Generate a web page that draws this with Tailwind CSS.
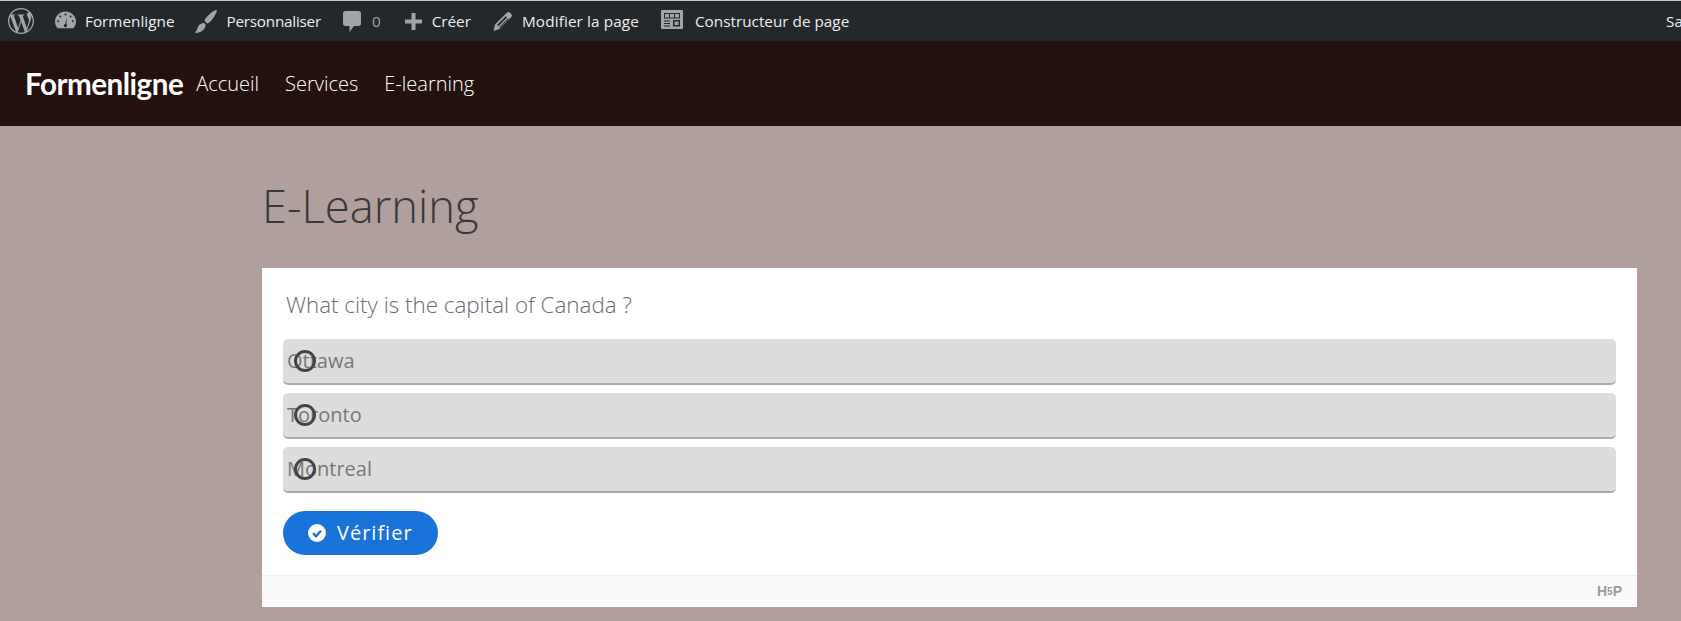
<!DOCTYPE html>
<html lang="fr">
<head>
    <meta charset="UTF-8">
    <meta name="viewport" content="width=device-width, initial-scale=1.0">
    <title>E-Learning - Formenligne</title>
    <script src="https://cdn.jsdelivr.net/npm/@tailwindcss/browser@4"></script>
</head>
<body class="bg-[#b09f9d] font-['Open_Sans',sans-serif] h-[621px] overflow-hidden">
    <!-- admin bar -->
    <div class="h-[41px] bg-[#23282d] border-t border-[#c4c4c4] flex items-center text-[15.3px] text-[#eeeeee] whitespace-nowrap relative overflow-hidden">
        <svg class="ml-[8px] w-[26px] h-[26px] fill-[#a0a5aa]" viewBox="0 0 24 24"><path d="M21.469 6.825c.84 1.537 1.318 3.3 1.318 5.175 0 3.979-2.156 7.456-5.363 9.325l3.295-9.527c.615-1.54.82-2.771.82-3.864 0-.405-.026-.78-.07-1.11m-7.981.105c.647-.03 1.232-.105 1.232-.105.582-.075.514-.93-.067-.899 0 0-1.755.135-2.88.135-1.064 0-2.85-.15-2.85-.15-.585-.03-.661.855-.075.885 0 0 .54.061 1.125.09l1.68 4.605-2.37 7.08L5.354 6.9c.649-.03 1.234-.1 1.234-.1.585-.075.516-.93-.065-.896 0 0-1.746.138-2.874.138-.2 0-.438-.008-.69-.015C4.911 3.15 8.235 1.215 12 1.215c2.809 0 5.365 1.072 7.286 2.833-.046-.003-.091-.009-.141-.009-1.06 0-1.812.923-1.812 1.914 0 .89.513 1.643 1.06 2.531.411.72.89 1.643.89 2.977 0 .915-.354 1.994-.821 3.479l-1.075 3.585-3.9-11.61.001.014zM12 22.784c-1.059 0-2.081-.153-3.048-.437l3.237-9.406 3.315 9.087c.024.053.05.101.078.149-1.12.393-2.325.609-3.582.609M1.211 12c0-1.564.336-3.05.935-4.39L7.29 21.709C3.694 19.96 1.212 16.271 1.211 12M12 0C5.385 0 0 5.385 0 12s5.385 12 12 12 12-5.385 12-12S18.615 0 12 0"/></svg>
        <!-- gauge -->
        <svg class="ml-[21px] w-[21px] h-[18px] -mt-[3px] fill-[#a0a5aa]" viewBox="0 0 22 18"><path fill-rule="evenodd" d="M11 0C5 0 0 4.600 0 10.600c0 2.700 1 5.200 2.700 7h16.600c1.700-1.800 2.700-4.300 2.700-7C22 4.600 17 0 11 0zM11 2.300a1 1 0 1 1 0 2 1 1 0 0 1 0-2zM5.600 4.300a1 1 0 1 1 0 2 1 1 0 0 1 0-2zM16.400 4.300a1 1 0 1 1 0 2 1 1 0 0 1 0-2zM3.400 9.300a1 1 0 1 1 0 2 1 1 0 0 1 0-2zM18.600 9.300a1 1 0 1 1 0 2 1 1 0 0 1 0-2zM12.800 6.500l-.9 6.800c.5.400.8.900.8 1.500a1.700 1.700 0 0 1-3.400 0c0-.8.600-1.500 1.400-1.700z"/></svg>
        <span class="ml-[9px]">Formenligne</span>
        <!-- brush -->
        <svg class="ml-[21px] w-[22px] h-[23px] fill-[#a0a5aa]" viewBox="0 0 22 23"><path d="M21 0c.7 0 1.100.5.9 1.200C20.500 5 17 10.500 13.500 13c-.7.500-1.500.5-2 0l-1.600-1.700c-.5-.5-.4-1.300.1-2C12.500 5.500 17.500 1 21 0zM8 13c1.600-.4 3 1.300 2.500 2.900-.8 3.500-3.800 6.700-10 7-.4 0-.6-.4-.3-.7C2 20.700 2.200 19.200 2.700 17.600 3.400 15.200 5.300 13.600 8 13z"/></svg>
        <span class="ml-[9px] tracking-[-0.25px]">Personnaliser</span>
        <!-- comment -->
        <svg class="ml-[22px] w-[18px] h-[21px] fill-[#a0a5aa]" viewBox="0 0 18 21"><path d="M2.500 0h13C17 0 18 1 18 2.500v10c0 1.500-1 2.500-2.500 2.500H11l-4.500 6v-6h-4C1 15 0 14 0 12.500v-10C0 1 1 0 2.500 0z"/></svg>
        <span class="ml-[11px] text-[#a0a5aa]">0</span>
        <!-- plus -->
        <svg class="ml-[24px] w-[17px] h-[17px] fill-[#a0a5aa]" viewBox="0 0 17 17"><path d="M6.500 0h4v6.500H17v4h-6.500V17h-4v-6.500H0v-4h6.500z"/></svg>
        <span class="ml-[10px]">Créer</span>
        <!-- pencil -->
        <svg class="ml-[22px] w-[19px] h-[19px] fill-[#a0a5aa]" viewBox="0 0 19 19"><path fill-rule="evenodd" d="M14 .6c.8-.8 2-.8 2.800 0l1.600 1.600c.8.800.8 2 0 2.800L6.500 17 .5 19 2 12.500zM12.800 4.300L4 13l1.300 1.300 8.800-8.800zM15 6.500l-8.700 8.700.9.600 8.700-8.700z"/></svg>
        <span class="ml-[10px] tracking-[0.12px]">Modifier la page</span>
        <!-- page builder -->
        <svg class="ml-[22px] w-[22px] h-[19px] -mt-[3px]" viewBox="0 0 22 19"><rect width="22" height="19" rx="1" fill="#a0a5aa"/><rect x="3" y="3" width="16" height="5.500" fill="#23282d"/><rect x="4" y="4" width="4" height="3.500" fill="#a0a5aa"/><rect x="9" y="4" width="4" height="3.500" fill="#a0a5aa"/><rect x="14" y="4" width="4" height="3.500" fill="#a0a5aa"/><rect x="3" y="10.500" width="6" height="1" fill="#23282d"/><rect x="3" y="13" width="6" height="1" fill="#23282d"/><rect x="3" y="15.500" width="6" height="1" fill="#23282d"/><rect x="12" y="10" width="7" height="6.500" fill="#23282d"/><rect x="13.500" y="11.500" width="4" height="3.500" fill="#a0a5aa"/></svg>
        <span class="ml-[12px]">Constructeur de page</span>
        <span class="absolute left-[1666px]">Salut</span>
    </div>

    <!-- site nav -->
    <nav class="h-[85px] bg-[#24100d] flex items-center text-white pl-[25px]">
        <a class="font-['Lato',sans-serif] font-bold text-[29.6px] tracking-[-0.5px] leading-none">Formenligne</a>
        <a class="ml-[13px] font-light text-[20px]">Accueil</a>
        <a class="ml-[26px] font-light text-[20px]">Services</a>
        <a class="ml-[26px] font-light text-[20px]">E-learning</a>
    </nav>

    <main class="pl-[262px] w-[1637px]">
        <h1 class="pt-[50px] h-[142px] font-light text-[45.3px] leading-[60px] text-[#3a3838]">E-Learning</h1>

        <!-- h5p card -->
        <div class="bg-white h-[339px] flex flex-col">
            <div class="flex-1 px-[21px]">
                <p class="pt-[23px] pl-[3px] h-[71px] font-light text-[22.4px] leading-[28px] text-[#6b6b6b]">What city is the capital of Canada ?</p>
                <div class="flex flex-col gap-[8px]">
                    <div class="relative h-[46px] bg-[#dddddd] rounded-[5px] border-b-2 border-[#aaaaaa] flex items-center pl-[4px] text-[20px] text-[#777777]">
                        Ottawa
                        <span class="absolute left-[11px] top-[11px] w-[22px] h-[22px] rounded-full border-[3px] border-[#444444]"></span>
                    </div>
                    <div class="relative h-[46px] bg-[#dddddd] rounded-[5px] border-b-2 border-[#aaaaaa] flex items-center pl-[4px] text-[20px] text-[#777777]">
                        Toronto
                        <span class="absolute left-[11px] top-[11px] w-[22px] h-[22px] rounded-full border-[3px] border-[#444444]"></span>
                    </div>
                    <div class="relative h-[46px] bg-[#dddddd] rounded-[5px] border-b-2 border-[#aaaaaa] flex items-center pl-[4px] text-[20px] text-[#777777]">
                        Montreal
                        <span class="absolute left-[11px] top-[11px] w-[22px] h-[22px] rounded-full border-[3px] border-[#444444]"></span>
                    </div>
                </div>
                <button class="mt-[18px] w-[155px] h-[44px] bg-[#1a73d9] rounded-full text-white font-medium text-[20px] tracking-[1px] flex items-center pl-[25px]">
                    <svg class="w-[18px] h-[18px] mr-[11px]" viewBox="0 0 18 18"><circle cx="9" cy="9" r="9" fill="#ffffff"/><path d="M5 9.200l3 3 5-5.400" fill="none" stroke="#1a73d9" stroke-width="2.400"/></svg>
                    Vérifier
                </button>
            </div>
            <div class="h-[32px] bg-[#fafafa] border-t border-[#eeeeee] flex items-center justify-end pr-[15px] text-[#9a9a9a] text-[14px] font-bold font-['Liberation_Sans',sans-serif]">
                <span>H</span><span class="text-[10px]">5</span><span>P</span>
            </div>
        </div>
    </main>
</body>
</html>
